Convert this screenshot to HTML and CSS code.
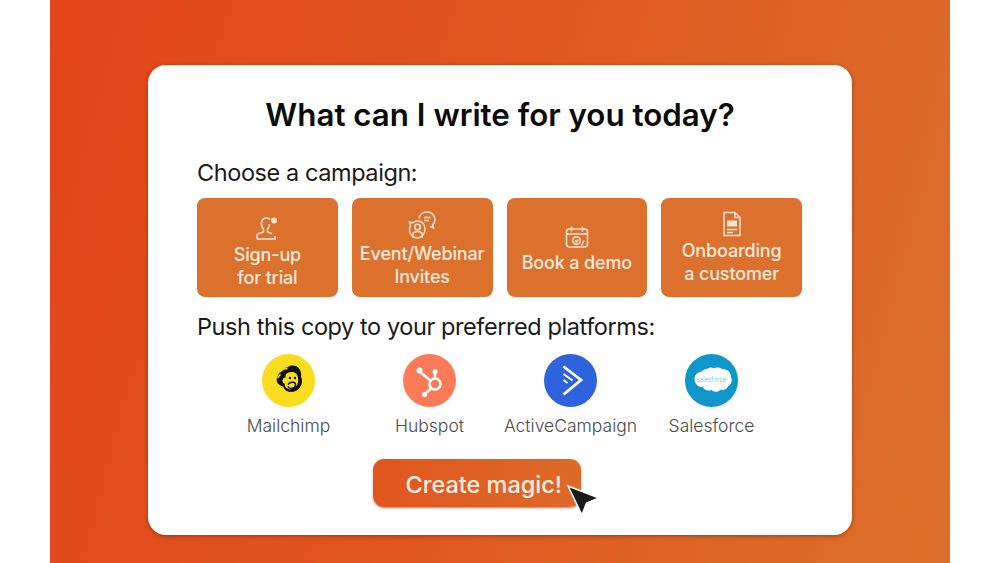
FILE: index.html
```html
<!DOCTYPE html>
<html lang="en">
<head>
  <meta charset="UTF-8" />
  <title>What can I write for you today?</title>
  <link rel="stylesheet" href="styles.css">
</head>
<body>
  <div class="slide">
    <div class="card">
      <h1>What can I write for you today?</h1>
      <p class="label">Choose a campaign:</p>
      <div class="tiles">
        <div class="tile tile-signup">
          <svg class="tile-icon" width="26" height="26" viewBox="0 0 26 26">
            <path d="M3 24v-4c0-1.600 5-2 6.500-3.200v-2.600C7.800 12.500 7.200 10 7.500 7.500 8 4.500 10.200 3 12.500 3c1.500 0 2.700.5 3.600 1.500M15.500 9c0 2.500-.7 4-2 5.200v2.600c1 .8 3 1.200 4.500 1.700M3 24h18v-3" />
            <circle class="fill" cx="20" cy="5.500" r="3" />
          </svg>
          <span>Sign-up<br>for trial</span>
        </div>
        <div class="tile tile-event">
          <svg class="tile-icon" width="30" height="30" viewBox="0 0 30 30">
            <path d="M12 8.500C12.500 4.500 16 2 20 2c4.500 0 8 3.300 8 7.500 0 2.300-1 4.200-2.500 5.500l1 3-3.500-1.500" />
            <path d="M10 11c4.500-.5 8 3 8 8 0 5-3.500 9-8 9-4.200 0-7.500-3.700-7.500-8 0-1.500.3-2.700 1-3.800L2.500 12l3.200.8C7 11.800 8.400 11.200 10 11z" />
            <circle cx="10.500" cy="17" r="2.800" />
            <path d="M6 28v-3.500c0-2 2-3 4.500-3s4.500 1 4.500 3V28M17 7.500h6.500M17 10.500h5" />
          </svg>
          <span>Event/Webinar<br>Invites</span>
        </div>
        <div class="tile tile-demo">
          <svg class="tile-icon" width="26" height="24" viewBox="0 0 26 24">
            <rect x="2.500" y="4" width="21" height="18" rx="3" />
            <path d="M2.500 9h21M7.500 1.500v5M18.500 1.500v5M20 15.500l-2.500 5" />
            <circle cx="12.500" cy="15.500" r="3.800" />
            <path d="M11 15.500l1.300 1.300 2-2.400" />
          </svg>
          <span>Book a demo</span>
        </div>
        <div class="tile tile-onboard">
          <svg class="tile-icon" width="20" height="26" viewBox="0 0 20 26">
            <path d="M2 1.500h11l5 5v18H2z" />
            <path class="fill" d="M5 9.500h10v6H5z" />
            <path d="M13 1.500v5h5M5 18.500h10M5 21.500h6" />
          </svg>
          <span>Onboarding<br>a customer</span>
        </div>
      </div>
      <p class="label label-push">Push this copy to your preferred platforms:</p>
      <div class="platforms">
        <div class="platform">
          <svg width="53" height="53" viewBox="0 0 53 53">
            <circle cx="26.500" cy="26.500" r="26.500" fill="#fadc1e" />
            <path fill="#111" d="M26 13c4-2.500 9-1.500 11 1.500 2 2.500 2.500 5.500 2 8 1.500 3 1.500 7-.5 10-2.500 4-7 6-11 5.500-3-.5-5.500-2.500-6.500-5.500-2-.5-5-2-6-4.500-1-3 .5-7 3-10 1.500-2.500 4.500-4 8-5z" />
            <path fill="#fadc1e" d="M24 20c3-2.500 8-3 10.500 0 2 3 2.500 8 .5 11-1.500 3-5.500 5-8.500 4-2.500-.5-4-3-4-5.500-1.500-.5-2.500-1.800-2-3.500.5-1.500 1.500-2.500 3-2.500 0-1.300.2-2.500.5-3.500z" />
            <path fill="none" stroke="#fadc1e" stroke-width="1.600" d="M18 18c2-2.500 5-3.500 7.500-3.500M16 24c.5-1.500 1.500-3 2.500-3.500" />
            <path fill="none" stroke="#111" stroke-width="1.500" d="M26 30.500c1.500-2.500 5-3 7-1.500 1 1.500.5 4-1.500 5-2 1-4.500.5-5.500-1.500" />
            <circle cx="28" cy="24" r="1.200" fill="#111" />
            <circle cx="33" cy="24" r="1.200" fill="#111" />
          </svg>
          <span>Mailchimp</span>
        </div>
        <div class="platform">
          <svg width="53" height="53" viewBox="0 0 53 53">
            <circle cx="26.500" cy="26.500" r="26.500" fill="#fb7a57" />
            <g fill="none" stroke="#fff" stroke-width="2.600">
              <circle cx="32" cy="30" r="5.500" />
              <path d="M27.500 26.500L17 18M28 34.500l-5.500 5M32 24.500v-6" />
            </g>
            <g fill="#fff">
              <circle cx="16.500" cy="16.500" r="3" />
              <circle cx="21.500" cy="40.500" r="2.500" />
              <circle cx="32" cy="17.500" r="2.500" />
            </g>
          </svg>
          <span>Hubspot</span>
        </div>
        <div class="platform">
          <svg width="53" height="53" viewBox="0 0 53 53">
            <circle cx="26.500" cy="26.500" r="26.500" fill="#2f63dd" />
            <path fill="none" stroke="#fff" stroke-width="2.800" d="M19.500 12.500L37 26 19.500 40.500" />
            <path fill="none" stroke="#fff" stroke-width="2" d="M19.500 20l9 6.500M19.500 26l4 3" />
          </svg>
          <span>ActiveCampaign</span>
        </div>
        <div class="platform">
          <svg width="53" height="53" viewBox="0 0 53 53">
            <circle cx="26.500" cy="26.500" r="26.500" fill="#0f96cb" />
            <path fill="#fff" d="M22 15c2-1.800 5-2 7-.5 2-1.500 6-1.500 8 .5 4-.5 9 2.500 9 8 1.500 3 .5 8-3 9.500-1.500 3-5 4-7.500 3-2 3-6.500 3-9 .5-3.500 1.500-7.500 0-9-3-4 .5-8-3-8-8 0-4 3-7 6.500-7 1-1.500 3-2.500 5-3z" />
            <text class="logo-text" x="26.500" y="28" text-anchor="middle">salesforce</text>
          </svg>
          <span>Salesforce</span>
        </div>
      </div>
      <div class="action">
        <div class="magic">
          Create magic!
          <svg class="cursor" width="36" height="34" viewBox="0 0 36 34">
            <path fill="#1b1b1b" stroke="#fff" stroke-width="1.500" d="M2 2l31 12-12.500 5L16 31z" />
          </svg>
        </div>
      </div>
    </div>
  </div>
</body>
</html>
```

FILE: styles.css
```css
body {
  margin: 0;
  background: #fff;
  font-family: Inter, "Liberation Sans", sans-serif;
  color: #111;
}
.slide {
  width: 900px;
  height: 563px;
  margin: 0 auto;
  padding-top: 65px;
  box-sizing: border-box;
  background: linear-gradient(105deg, #e2451a 0%, #e0561f 45%, #dc702b 100%);
}
.card {
  width: 704px;
  height: 470px;
  margin: 0 auto;
  padding: 31px 49px 0;
  box-sizing: border-box;
  background: #fff;
  border-radius: 18px;
  box-shadow: 0 1px 4px rgba(120, 30, 0, 0.55);
}
h1 {
  margin: 0;
  font-size: 31.300px;
  line-height: 38px;
  font-weight: 600;
  text-align: center;
  color: #0c0c0c;
}
.label {
  margin: 24px 0 10px;
  font-size: 23.500px;
  line-height: 30px;
  letter-spacing: -0.42px;
  color: #1a1a1a;
}
.label-push {
  margin: 15px 0 11.500px;
}
.tiles {
  display: flex;
  gap: 14px;
}
.tile {
  width: 140.750px;
  height: 99px;
  display: flex;
  flex-direction: column;
  align-items: center;
  justify-content: center;
  gap: 2px;
  box-sizing: border-box;
  background: #dc712d;
  border-radius: 8px;
  color: #fbe9dc;
  font-size: 18px;
  font-weight: 500;
  letter-spacing: -0.15px;
  line-height: 23px;
  text-align: center;
}
.tile-signup {
  padding-top: 8px;
}
.tile-event {
  padding-top: 3px;
}
.tile-demo {
  padding-top: 4px;
}
.tile-icon {
  fill: none;
  stroke: #fbe3d3;
  stroke-width: 1.500;
}
.tile-icon .fill {
  fill: #fbe3d3;
  stroke: none;
}
.platforms {
  display: flex;
  justify-content: flex-start;
  margin-left: 21px;
}
.platform {
  width: 141px;
  display: flex;
  flex-direction: column;
  align-items: center;
  gap: 7px;
  font-size: 17.500px;
  line-height: 24px;
  color: #4a4a4a;
  font-weight: 300;
  white-space: nowrap;
}
.logo-text {
  font-size: 6.500px;
  fill: #3ba3d6;
  font-family: "Open Sans", sans-serif;
}
.action {
  display: flex;
  justify-content: center;
  margin-top: 21px;
  padding-right: 47px;
}
.magic {
  position: relative;
  width: 208px;
  height: 48px;
  padding-left: 33px;
  box-sizing: border-box;
  background: linear-gradient(90deg, #e0561f, #dd6a28);
  border-radius: 11px;
  box-shadow: 0 1px 2px rgba(150, 40, 0, 0.6);
  color: #fdeee3;
  font-size: 23.500px;
  font-weight: 500;
  line-height: 52px;
}
.cursor {
  position: absolute;
  left: 193px;
  top: 25px;
}
```
